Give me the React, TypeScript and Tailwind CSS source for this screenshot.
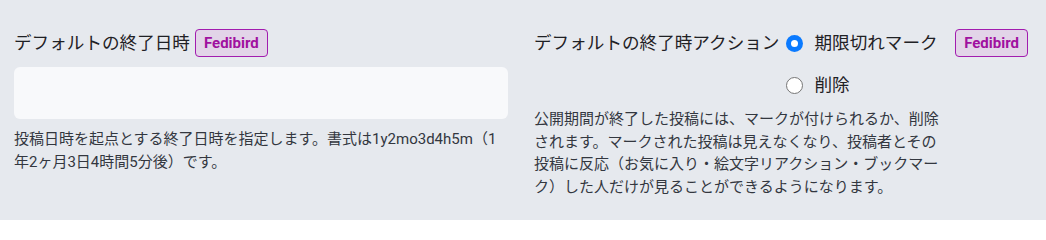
const font = { fontFamily: 'Roboto, "Noto Sans CJK JP", sans-serif' };

function Badge() {
  return (
    <span className="inline-flex h-[28px] items-center rounded-[4px] border border-[#a21caf] bg-[#e2d4e8] px-[8px] text-[15px] font-bold text-[#a0119f]">
      Fedibird
    </span>
  );
}

function Radio({ checked, label }: { checked?: boolean; label: string }) {
  return (
    <label className="flex h-[28px] items-center gap-[11px] text-[17.6px] text-[#1f2125]">
      {checked ? (
        <span className="flex h-[17px] w-[17px] items-center justify-center rounded-full bg-[#0a7aff]">
          <span className="h-[7px] w-[7px] rounded-full bg-white" />
        </span>
      ) : (
        <span className="h-[17px] w-[17px] rounded-full border border-[#767676] bg-white" />
      )}
      {label}
    </label>
  );
}

export default function App() {
  return (
    <div className="h-[220px] w-full overflow-hidden bg-[#e6e9ee] pl-[14px] pt-[29px]" style={font}>
      <div className="flex gap-[26px]">
        <div className="flex w-[494px] flex-col">
          <div className="flex h-[28px] items-center gap-[5px]">
            <span className="text-[17.6px] text-[#1f2125]">デフォルトの終了日時</span>
            <Badge />
          </div>
          <div className="mt-[10px] h-[52px] w-full rounded-[6px] bg-[#f8f9fb]" />
          <p className="mt-[9px] text-[15px] leading-[22.5px] text-[#33373f]">
            投稿日時を起点とする終了日時を指定します。書式は1y2mo3d4h5m（1年2ヶ月3日4時間5分後）です。
          </p>
        </div>
        <div className="flex w-[494px] flex-col">
          <div className="flex items-start">
            <span className="flex h-[28px] items-center text-[17.6px] text-[#1f2125]">
              デフォルトの終了時アクション
            </span>
            <div className="ml-[7px] flex flex-col gap-[14px]">
              <Radio checked label="期限切れマーク" />
              <Radio label="削除" />
            </div>
            <div className="ml-auto">
              <Badge />
            </div>
          </div>
          <p className="mt-[9px] w-[410px] text-[15px] leading-[22.5px] text-[#33373f]">
            公開期間が終了した投稿には、マークが付けられるか、削除されます。マークされた投稿は見えなくなり、投稿者とその投稿に反応（お気に入り・絵文字リアクション・ブックマーク）した人だけが見ることができるようになります。
          </p>
        </div>
      </div>
    </div>
  );
}
